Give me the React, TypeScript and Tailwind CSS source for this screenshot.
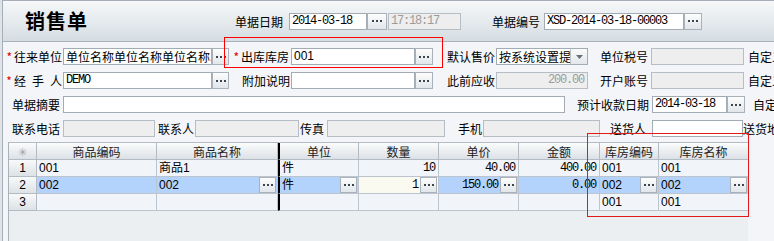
import type { ReactNode } from "react";

const mono = "font-['Liberation_Mono','Noto_Sans_CJK_SC',monospace] tracking-[-1.2px]";

function Dots({ className = "" }: { className?: string }) {
    return (
        <span
            className={`flex h-full shrink-0 items-center justify-center gap-[2px] border border-[#a9b1ba] bg-linear-to-b from-[#fdfdfd] to-[#e2e6ea] ${className}`}
        >
            <i className="h-[2px] w-[2px] bg-[#3b4550]" />
            <i className="h-[2px] w-[2px] bg-[#3b4550]" />
            <i className="h-[2px] w-[2px] bg-[#3b4550]" />
        </span>
    );
}

function Label({ className = "", req, children }: { className?: string; req?: boolean; children: ReactNode }) {
    return (
        <div className={`flex h-full shrink-0 items-center justify-end whitespace-nowrap ${className}`}>
            {req && <span className="mr-[2px] text-[12px] leading-none text-[#e00000]">*</span>}
            {children}
        </div>
    );
}

function Box({
    className = "",
    disabled,
    right,
    children,
}: {
    className?: string;
    disabled?: boolean;
    right?: boolean;
    children?: ReactNode;
}) {
    return (
        <div
            className={`flex h-full shrink-0 items-center overflow-hidden whitespace-nowrap border px-[2px] ${
                disabled ? "border-[#b7bdc4] bg-[#eeeeee] text-[#9b9b9b]" : "border-[#a3abb4] bg-white"
            } ${right ? "justify-end" : ""} ${className}`}
        >
            {children}
        </div>
    );
}

type Cell = { text?: string; num?: boolean; btn?: boolean; cream?: boolean };

const colW = [
    "w-[28px]",
    "w-[120px]",
    "w-[121px]",
    "w-[81px] border-l-2 border-l-black",
    "w-[80px]",
    "w-[80px]",
    "w-[81px]",
    "w-[59px]",
    "w-[90px]",
];

const heads = ["", "商品编码", "商品名称", "单位", "数量", "单价", "金额", "库房编码", "库房名称"];

const rows: { n: string; sel?: boolean; cells: Cell[] }[] = [
    {
        n: "1",
        cells: [
            { text: "001" },
            { text: "商品1" },
            { text: "件" },
            { text: "10", num: true },
            { text: "40.00", num: true },
            { text: "400.00", num: true },
            { text: "001" },
            { text: "001" },
        ],
    },
    {
        n: "2",
        sel: true,
        cells: [
            { text: "002" },
            { text: "002", btn: true },
            { text: "件", btn: true },
            { text: "1", num: true, btn: true, cream: true },
            { text: "150.00", num: true, btn: true },
            { text: "0.00", num: true },
            { text: "002", btn: true },
            { text: "002", btn: true },
        ],
    },
    {
        n: "3",
        cells: [{}, {}, {}, {}, {}, {}, { text: "001" }, { text: "001" }],
    },
];

function GridRow({ n, sel, cells }: { n: string; sel?: boolean; cells: Cell[] }) {
    return (
        <div className="flex h-[17px] shrink-0">
            <div className="flex w-[28px] shrink-0 items-center justify-center border-r border-b border-[#b3bbc4] bg-linear-to-b from-[#f8f9fa] to-[#dde2e6] font-['Liberation_Sans',sans-serif]">
                {n}
            </div>
            {cells.map((c, i) => (
                <div
                    key={i}
                    className={`flex shrink-0 items-center border-r border-b border-[#bcc4cd] ${colW[i + 1]} ${
                        c.cream ? "bg-[#fbfaf1]" : sel ? "bg-[#b4d3fc]" : "bg-[#f1f4f9]"
                    } ${c.num ? "justify-end" : ""} ${c.btn ? "pr-[1px]" : c.num ? "pr-[3px]" : ""}`}
                >
                    {c.text && (
                        <span
                            className={`whitespace-nowrap ${
                                c.num ? mono : "pl-[2px] font-['Liberation_Sans','Noto_Sans_CJK_SC',sans-serif]"
                            } ${c.btn && !c.num ? "flex-1" : ""} ${c.btn && c.num ? "mr-[2px]" : ""}`}
                        >
                            {c.text}
                        </span>
                    )}
                    {c.btn && <Dots className="h-[14px] w-[17px]" />}
                </div>
            ))}
        </div>
    );
}

export default function App() {
    return (
        <div className="relative h-[241px] w-[774px] overflow-hidden bg-[#dfe3e7] pl-[2px] font-['Noto_Sans_CJK_SC',sans-serif] text-[12px] leading-[15px] text-black">
            <div className="flex h-full w-[800px] flex-col border-t border-l border-[#a6aeb7] bg-[#f3f5f8]">
                {/* header */}
                <div className="flex h-[41px] shrink-0 items-center border-b border-[#a9b2ba] bg-linear-to-b from-[#f6f8f9] to-[#d5dde2]">
                    <div className="w-[227px] shrink-0 pl-[22px] text-[20px] font-bold leading-none tracking-[1px]">销售单</div>
                    <div className="flex h-[17px] items-center">
                        <Label className="w-[59px] pr-[6px]">单据日期</Label>
                        <Box className="w-[78px]">
                            <span className={mono}>2014-03-18</span>
                        </Box>
                        <Dots className="w-[20px]" />
                        <Box disabled className="ml-[1px] w-[73px]">
                            <span className={mono}>17:18:17</span>
                        </Box>
                        <Label className="w-[83px] pr-[4px]">单据编号</Label>
                        <Box className="w-[140px]">
                            <span className={mono}>XSD-2014-03-18-00003</span>
                        </Box>
                        <Dots className="w-[18px]" />
                    </div>
                </div>

                {/* form */}
                <div className="flex shrink-0 flex-col gap-[7px] pt-[6px]">
                    <div className="flex h-[17px]">
                        <Label req className="w-[60px] pr-[1px]">往来单位</Label>
                        <Box className="w-[149px]">单位名称单位名称单位名称单位名称</Box>
                        <Dots className="w-[17px]" />
                        <Label req className="w-[62px] pr-[2px]">出库库房</Label>
                        <Box className="w-[124px]">
                            <span className="font-['Liberation_Sans',sans-serif]">001</span>
                        </Box>
                        <Dots className="w-[18px]" />
                        <Label className="w-[63px] pr-[1px]">默认售价</Label>
                        <div className="flex h-full w-[92px] shrink-0 border border-[#a3abb4] bg-white">
                            <div className="flex-1 overflow-hidden whitespace-nowrap pl-[2px] leading-[15px]">按系统设置提供</div>
                            <div className="flex w-[17px] items-center justify-center border-l border-[#b8c0c8] bg-linear-to-b from-[#fbfbfc] to-[#e3e7eb]">
                                <svg width="7" height="4" viewBox="0 0 7 4">
                                    <path d="M0 0h7L3.5 4z" fill="#66707a" />
                                </svg>
                            </div>
                        </div>
                        <Label className="w-[63px] pr-[3px]">单位税号</Label>
                        <Box disabled className="w-[93px]" />
                        <Label className="ml-[4px]">自定义1</Label>
                    </div>

                    <div className="flex h-[17px]">
                        <Label req className="w-[60px] pr-[1px]">
                            <span>经</span>
                            <span className="ml-[6px]">手</span>
                            <span className="ml-[6px]">人</span>
                        </Label>
                        <Box className="w-[149px]">
                            <span className={mono}>DEMO</span>
                        </Box>
                        <Dots className="w-[17px]" />
                        <Label className="w-[62px] pr-[1px]">附加说明</Label>
                        <Box className="w-[124px]" />
                        <Dots className="w-[18px]" />
                        <Label className="w-[63px] pr-[1px]">此前应收</Label>
                        <Box disabled right className="w-[92px] pr-[3px]">
                            <span className={mono}>200.00</span>
                        </Box>
                        <Label className="w-[63px] pr-[3px]">开户账号</Label>
                        <Box disabled className="w-[93px]" />
                        <Label className="ml-[4px]">自定义2</Label>
                    </div>

                    <div className="flex h-[17px]">
                        <Label className="w-[60px] pr-[3px]">单据摘要</Label>
                        <Box className="w-[502px]" />
                        <Label className="w-[87px] pr-[3px]">预计收款日期</Label>
                        <Box className="w-[75px]">
                            <span className={mono}>2014-03-18</span>
                        </Box>
                        <Dots className="w-[18px]" />
                        <Label className="ml-[8px]">自定义3</Label>
                    </div>

                    <div className="flex h-[17px]">
                        <Label className="w-[60px] pr-[3px]">联系电话</Label>
                        <Box disabled className="w-[92px]" />
                        <Label className="w-[40px] pr-[1px]">联系人</Label>
                        <Box disabled className="w-[104px]" />
                        <Label className="w-[28px] justify-start pl-[1px]">传真</Label>
                        <Box disabled className="w-[118px]" />
                        <Label className="w-[38px] pr-[1px]">手机</Label>
                        <Box disabled className="w-[117px]" />
                        <Label className="w-[52px] pr-[6px]">送货人</Label>
                        <Box className="w-[91px]" />
                        <Label>送货地址</Label>
                    </div>
                </div>

                {/* grid */}
                <div className="ml-[5px] mt-[5px] flex w-[740px] flex-1 flex-col border-l border-[#a9b1b9] bg-[#eceff2]">
                    <div className="flex h-[18px] shrink-0 border-t border-[#b3bbc4]">
                        {heads.map((h, i) => (
                            <div
                                key={i}
                                className={`flex shrink-0 items-center justify-center border-r border-b border-[#b3bbc4] bg-linear-to-b from-[#fbfcfc] to-[#dce1e6] text-[#222] ${colW[i]}`}
                            >
                                {i === 0 ? <span className="text-[11px] text-[#9aa2aa]">✳</span> : h}
                            </div>
                        ))}
                    </div>
                    {rows.map((r) => (
                        <GridRow key={r.n} {...r} />
                    ))}
                </div>
            </div>

            {/* annotation boxes */}
            <div className="absolute top-[37px] left-[224px] h-[31px] w-[219px] border border-[#ff0000]" />
            <div className="absolute top-[133px] left-[587px] h-[84px] w-[162px] border border-[#e41a1a]" />
        </div>
    );
}
